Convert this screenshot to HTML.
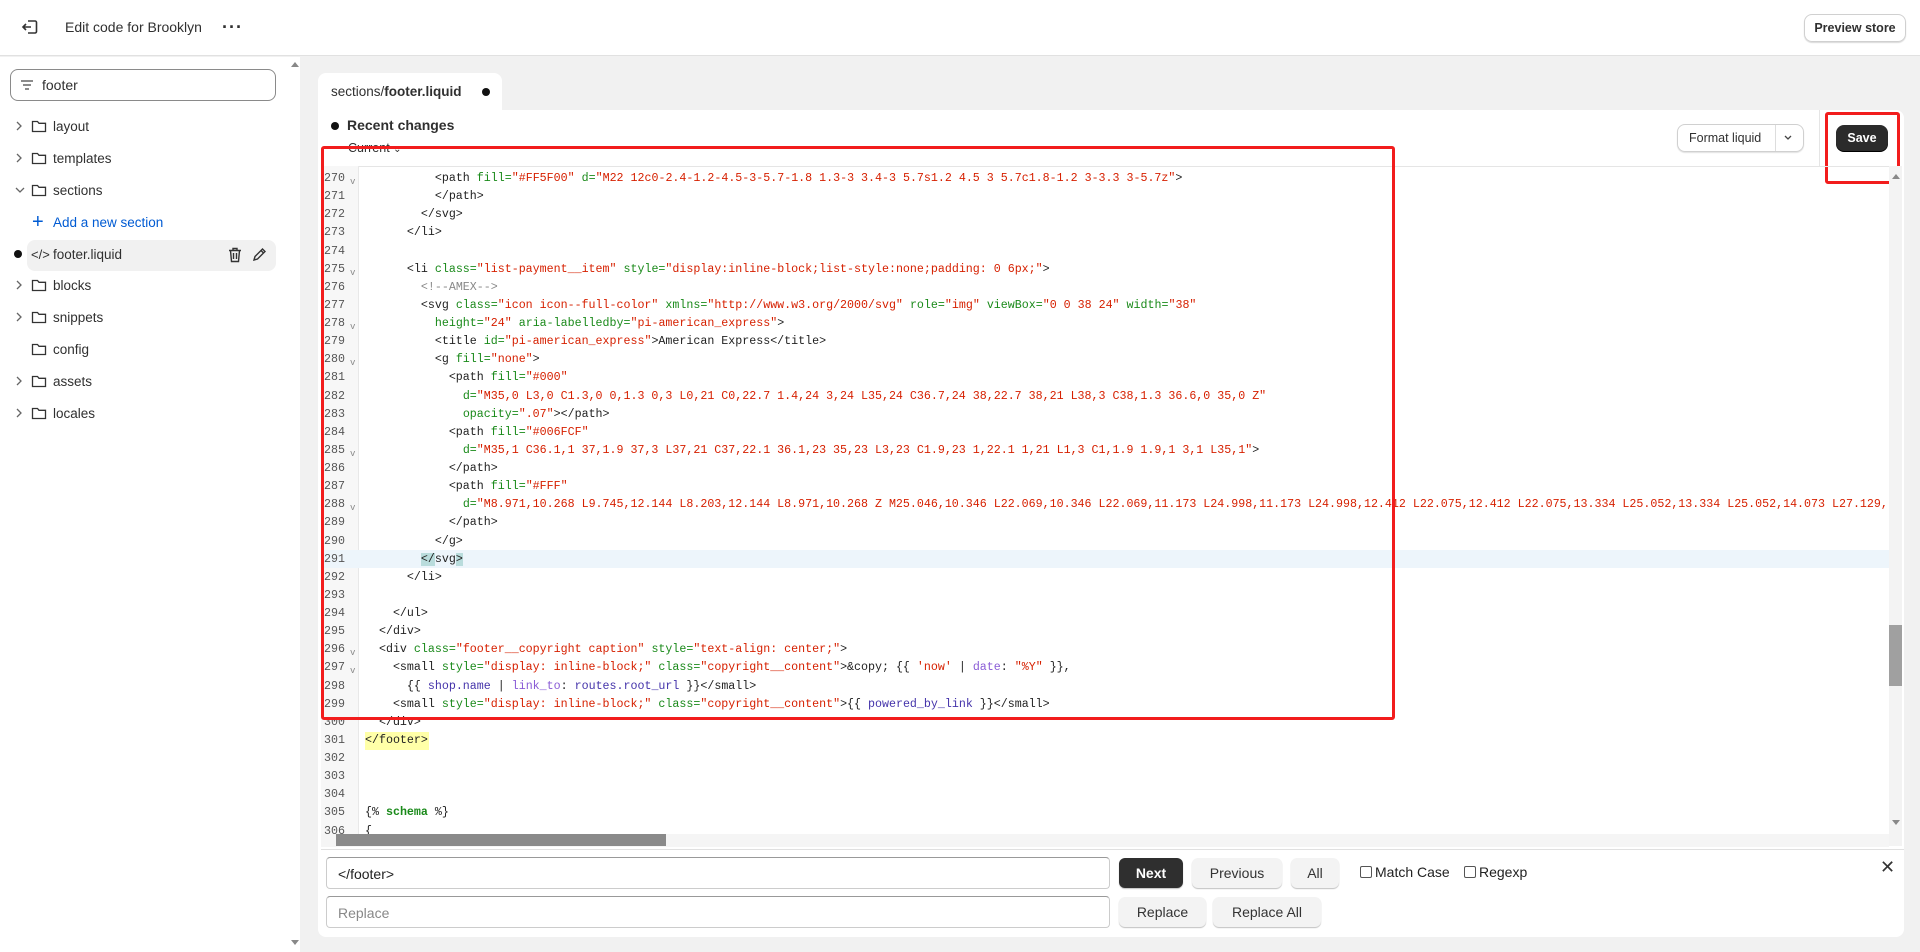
<!DOCTYPE html>
<html><head><meta charset="utf-8"><style>
*{box-sizing:border-box;margin:0;padding:0}
body{width:1920px;height:952px;overflow:hidden;background:#f1f1f1;font-family:"Liberation Sans",Arial,sans-serif;color:#303030;position:relative}
.abs{position:absolute}
#hdr{left:0;top:0;width:1920px;height:56px;background:#fff;border-bottom:1px solid #e1e1e1}
#side{left:0;top:57px;width:300px;height:895px;background:#fff}
.item{position:absolute;left:0;width:300px;height:30px;font-size:13.5px;color:#303030}
.item .chev{position:absolute;left:14px;top:8px}
.item .fold{position:absolute;left:31px;top:7px}
.item span{position:absolute;left:53px;top:7px}
#panel{left:318px;top:110px;width:1586px;height:827px;background:#fff;border-radius:0 8px 8px 8px}
#tab{left:318px;top:73px;width:184px;height:40px;background:#fff;border-radius:8px 8px 0 0}
.code{font-family:"Liberation Mono",monospace;font-size:11.65px;white-space:pre;line-height:18.12px}
#gut{left:321px;top:166px;width:38px;height:680px;background:#f7f7f7;border-right:1px solid #e8e8e8}
.t{color:#222}.a{color:#1a8a1a}.s{color:#d62000}.c{color:#888}.p{color:#8a5cd6}.v{color:#4433aa}
.btn{position:absolute;background:#f3f3f3;border-radius:6px;box-shadow:0 1px 1px rgba(0,0,0,.25);font-size:14px;color:#333;text-align:center}
</style></head><body>

<div id="hdr" class="abs">
  <svg class="abs" style="left:20px;top:17px" width="20" height="20" viewBox="0 0 20 20" fill="none" stroke="#333" stroke-width="1.6"><path d="M8 4h7a1.5 1.5 0 0 1 1.5 1.5v9A1.5 1.5 0 0 1 15 16H8"/><path d="M11 10H3M6 7l-3 3 3 3"/></svg>
  <div class="abs" style="left:65px;top:19px;font-size:14px;color:#303030">Edit code for Brooklyn</div>
  <div class="abs" style="left:222px;top:17px;font-size:18px;font-weight:bold;letter-spacing:1px">···</div>
  <div class="abs" style="left:1804px;top:14px;width:102px;height:28px;border:1px solid #d0d0d0;border-radius:8px;box-shadow:0 1px 1px rgba(0,0,0,.15);font-size:12.5px;text-align:center;line-height:26px;font-weight:bold;color:#303030">Preview store</div>
</div>

<div id="side" class="abs">
  <div class="abs" style="left:291px;top:5px;width:0;height:0;border-left:4px solid transparent;border-right:4px solid transparent;border-bottom:5px solid #888"></div>
  <div class="abs" style="left:291px;top:883px;width:0;height:0;border-left:4px solid transparent;border-right:4px solid transparent;border-top:5px solid #888"></div>
  <div class="abs" style="left:10px;top:12px;width:266px;height:32px;border:1px solid #8a8a8a;border-radius:8px">
    <svg class="abs" style="left:9px;top:9px" width="14" height="12" viewBox="0 0 14 12" stroke="#666" stroke-width="1.4"><path d="M1 2h12M3 6h8M5 10h4"/></svg>
    <div class="abs" style="left:31px;top:7px;font-size:14px;color:#303030">footer</div>
  </div>
</div>
<div class="abs" style="left:27px;top:240px;width:249px;height:31px;background:#f1f1f1;border-radius:8px"></div>
<div class="abs" style="left:14px;top:250px;width:8px;height:8px;border-radius:50%;background:#111"></div>

<div class="item" style="top:112px"><svg class="chev" width="10" height="12" viewBox="0 0 10 12" fill="none" stroke="#666" stroke-width="1.3"><path d="M3 2l4 4-4 4"/></svg><svg class="fold" width="16" height="14" viewBox="0 0 16 14" fill="none" stroke="#333" stroke-width="1.3"><path d="M1.5 2.5h5l1.5 1.8h6.5v8.2h-13z"/></svg><span>layout</span></div>
<div class="item" style="top:144px"><svg class="chev" width="10" height="12" viewBox="0 0 10 12" fill="none" stroke="#666" stroke-width="1.3"><path d="M3 2l4 4-4 4"/></svg><svg class="fold" width="16" height="14" viewBox="0 0 16 14" fill="none" stroke="#333" stroke-width="1.3"><path d="M1.5 2.5h5l1.5 1.8h6.5v8.2h-13z"/></svg><span>templates</span></div>
<div class="item" style="top:176px"><svg class="chev" width="12" height="12" viewBox="0 0 12 12" fill="none" stroke="#666" stroke-width="1.3"><path d="M2 4l4 4 4-4"/></svg><svg class="fold" width="16" height="14" viewBox="0 0 16 14" fill="none" stroke="#333" stroke-width="1.3"><path d="M1.5 2.5h5l1.5 1.8h6.5v8.2h-13z"/></svg><span>sections</span></div>
<div class="item" style="top:208px;color:#005bd3"><span style="left:32px;top:3px;font-size:20px">+</span><span>Add a new section</span></div>
<div class="item" style="top:240px"><span style="left:31px;font-size:13px">&lt;/&gt;</span><span>footer.liquid</span>
<svg class="abs" style="left:228px;top:7px" width="14" height="16" viewBox="0 0 14 16" fill="none" stroke="#333" stroke-width="1.4"><path d="M1 3.5h12M5 3.5V1.5h4v2M2.5 3.5l1 11h7l1-11M5.5 6v6M8.5 6v6"/></svg>
<svg class="abs" style="left:252px;top:7px" width="15" height="15" viewBox="0 0 15 15" fill="none" stroke="#333" stroke-width="1.4"><path d="M2 13l1-3.5 7.5-7.5 2.5 2.5-7.5 7.5z M9 3.5l2.5 2.5"/></svg></div>
<div class="item" style="top:271px"><svg class="chev" width="10" height="12" viewBox="0 0 10 12" fill="none" stroke="#666" stroke-width="1.3"><path d="M3 2l4 4-4 4"/></svg><svg class="fold" width="16" height="14" viewBox="0 0 16 14" fill="none" stroke="#333" stroke-width="1.3"><path d="M1.5 2.5h5l1.5 1.8h6.5v8.2h-13z"/></svg><span>blocks</span></div>
<div class="item" style="top:303px"><svg class="chev" width="10" height="12" viewBox="0 0 10 12" fill="none" stroke="#666" stroke-width="1.3"><path d="M3 2l4 4-4 4"/></svg><svg class="fold" width="16" height="14" viewBox="0 0 16 14" fill="none" stroke="#333" stroke-width="1.3"><path d="M1.5 2.5h5l1.5 1.8h6.5v8.2h-13z"/></svg><span>snippets</span></div>
<div class="item" style="top:335px"><svg class="fold" width="16" height="14" viewBox="0 0 16 14" fill="none" stroke="#333" stroke-width="1.3"><path d="M1.5 2.5h5l1.5 1.8h6.5v8.2h-13z"/></svg><span>config</span></div>
<div class="item" style="top:367px"><svg class="chev" width="10" height="12" viewBox="0 0 10 12" fill="none" stroke="#666" stroke-width="1.3"><path d="M3 2l4 4-4 4"/></svg><svg class="fold" width="16" height="14" viewBox="0 0 16 14" fill="none" stroke="#333" stroke-width="1.3"><path d="M1.5 2.5h5l1.5 1.8h6.5v8.2h-13z"/></svg><span>assets</span></div>
<div class="item" style="top:399px"><svg class="chev" width="10" height="12" viewBox="0 0 10 12" fill="none" stroke="#666" stroke-width="1.3"><path d="M3 2l4 4-4 4"/></svg><svg class="fold" width="16" height="14" viewBox="0 0 16 14" fill="none" stroke="#333" stroke-width="1.3"><path d="M1.5 2.5h5l1.5 1.8h6.5v8.2h-13z"/></svg><span>locales</span></div>

<div id="tab" class="abs">
  <div class="abs" style="left:13px;top:11px;font-size:13.5px;color:#303030">sections/<b style="font-weight:600">footer.liquid</b></div>
  <div class="abs" style="left:164px;top:15px;width:8px;height:8px;border-radius:50%;background:#111"></div>
</div>
<div id="panel" class="abs"></div>
<div class="abs" style="left:331px;top:122px;width:8px;height:8px;border-radius:50%;background:#111"></div>
<div class="abs" style="left:347px;top:117px;font-size:14px;font-weight:600;color:#303030">Recent changes</div>
<div class="abs" style="left:348px;top:141px;font-size:12.5px;color:#303030">Current <span style="font-size:10px">⌄</span></div>
<div class="abs" style="left:1677px;top:124px;width:127px;height:28px;border:1px solid #d0d0d0;border-radius:8px;box-shadow:0 1px 1px rgba(0,0,0,.12);font-size:12.5px;color:#303030">
  <div class="abs" style="left:11px;top:6px">Format liquid</div>
  <div class="abs" style="left:97px;top:0;width:1px;height:26px;background:#ddd"></div>
  <svg class="abs" style="left:105px;top:9px" width="10" height="8" viewBox="0 0 10 8" fill="none" stroke="#444" stroke-width="1.3"><path d="M2 2l3 3 3-3"/></svg>
</div>
<div class="abs" style="left:1819px;top:110px;width:1px;height:56px;background:#e5e5e5"></div>
<div class="abs" style="left:1836px;top:125px;width:52px;height:26px;background:#2b2b2b;border-radius:8px;color:#fff;font-size:12.5px;font-weight:bold;text-align:center;line-height:26px;box-shadow:0 1px 0 #000">Save</div>
<div class="abs" style="left:1825px;top:112px;width:75px;height:72px;border:3px solid #f21d1d;border-radius:3px"></div>
<div class="abs" style="left:359px;top:166px;width:1530px;height:1px;background:#e5e5e5"></div>

<div id="gut" class="abs"></div>
<div class="abs" style="left:321px;top:550px;width:1568px;height:18px;background:#edf5fb"></div>
<div class="abs" style="left:365px;top:732px;width:64px;height:18px;background:#ffffa8"></div>
<div class="abs" style="left:1889px;top:166px;width:13px;height:680px;background:#f3f3f3"></div>
<div class="abs" style="left:1889px;top:625px;width:13px;height:61px;background:#a0a0a0"></div>
<div class="abs" style="left:1892px;top:174px;border-left:4px solid transparent;border-right:4px solid transparent;border-bottom:5px solid #888;width:0;height:0"></div>
<div class="abs" style="left:1892px;top:820px;border-left:4px solid transparent;border-right:4px solid transparent;border-top:5px solid #888;width:0;height:0"></div>
<div class="abs" style="left:321px;top:834px;width:1568px;height:13px;background:#f5f5f5"></div>
<div class="abs" style="left:336px;top:834px;width:330px;height:12px;background:#8a8a8a"></div>

<div class="abs code" style="left:324px;top:170px;color:#555;width:35px;height:664px;overflow:hidden">270
271
272
273
274
275
276
277
278
279
280
281
282
283
284
285
286
287
288
289
290
291
292
293
294
295
296
297
298
299
300
301
302
303
304
305
306</div>
<div class="abs code" style="left:350px;top:173px;color:#888;font-size:9px">v




v


v

v




v


v







v
v</div>

<div class="abs code" style="left:365px;top:170px;width:1524px;height:664px;overflow:hidden;color:#222">          <span class="t">&lt;path</span> <span class="a">fill=</span><span class="s">"#FF5F00"</span> <span class="a">d=</span><span class="s">"M22 12c0-2.4-1.2-4.5-3-5.7-1.8 1.3-3 3.4-3 5.7s1.2 4.5 3 5.7c1.8-1.2 3-3.3 3-5.7z"</span>&gt;
          &lt;/path&gt;
        &lt;/svg&gt;
      &lt;/li&gt;

      &lt;li <span class="a">class=</span><span class="s">"list-payment__item"</span> <span class="a">style=</span><span class="s">"display:inline-block;list-style:none;padding: 0 6px;"</span>&gt;
        <span class="c">&lt;!--AMEX--&gt;</span>
        &lt;svg <span class="a">class=</span><span class="s">"icon icon--full-color"</span> <span class="a">xmlns=</span><span class="s">"http://www.w3.org/2000/svg"</span> <span class="a">role=</span><span class="s">"img"</span> <span class="a">viewBox=</span><span class="s">"0 0 38 24"</span> <span class="a">width=</span><span class="s">"38"</span>
          <span class="a">height=</span><span class="s">"24"</span> <span class="a">aria-labelledby=</span><span class="s">"pi-american_express"</span>&gt;
          &lt;title <span class="a">id=</span><span class="s">"pi-american_express"</span>&gt;American Express&lt;/title&gt;
          &lt;g <span class="a">fill=</span><span class="s">"none"</span>&gt;
            &lt;path <span class="a">fill=</span><span class="s">"#000"</span>
              <span class="a">d=</span><span class="s">"M35,0 L3,0 C1.3,0 0,1.3 0,3 L0,21 C0,22.7 1.4,24 3,24 L35,24 C36.7,24 38,22.7 38,21 L38,3 C38,1.3 36.6,0 35,0 Z"</span>
              <span class="a">opacity=</span><span class="s">".07"</span>&gt;&lt;/path&gt;
            &lt;path <span class="a">fill=</span><span class="s">"#006FCF"</span>
              <span class="a">d=</span><span class="s">"M35,1 C36.1,1 37,1.9 37,3 L37,21 C37,22.1 36.1,23 35,23 L3,23 C1.9,23 1,22.1 1,21 L1,3 C1,1.9 1.9,1 3,1 L35,1"</span>&gt;
            &lt;/path&gt;
            &lt;path <span class="a">fill=</span><span class="s">"#FFF"</span>
              <span class="a">d=</span><span class="s">"M8.971,10.268 L9.745,12.144 L8.203,12.144 L8.971,10.268 Z M25.046,10.346 L22.069,10.346 L22.069,11.173 L24.998,11.173 L24.998,12.412 L22.075,12.412 L22.075,13.334 L25.052,13.334 L25.052,14.073 L27.129,</span>
            &lt;/path&gt;
          &lt;/g&gt;
        <span style="background:#b9dcdc">&lt;/</span>svg<span style="background:#b9dcdc">&gt;</span>
      &lt;/li&gt;

    &lt;/ul&gt;
  &lt;/div&gt;
  &lt;div <span class="a">class=</span><span class="s">"footer__copyright caption"</span> <span class="a">style=</span><span class="s">"text-align: center;"</span>&gt;
    &lt;small <span class="a">style=</span><span class="s">"display: inline-block;"</span> <span class="a">class=</span><span class="s">"copyright__content"</span>&gt;&amp;copy; {{ <span class="s">'now'</span> | <span class="p">date</span>: <span class="s">"%Y"</span> }},
      {{ <span class="v">shop.name</span> | <span class="p">link_to</span>: <span class="v">routes.root_url</span> }}&lt;/small&gt;
    &lt;small <span class="a">style=</span><span class="s">"display: inline-block;"</span> <span class="a">class=</span><span class="s">"copyright__content"</span>&gt;{{ <span class="v">powered_by_link</span> }}&lt;/small&gt;
  &lt;/div&gt;
&lt;/footer&gt;



{% <b class="a">schema</b> %}
{</div>

<div class="abs" style="left:321px;top:146px;width:1074px;height:574px;border:3px solid #f21d1d;border-radius:3px"></div>

<div class="abs" style="left:321px;top:849px;width:1583px;height:1px;background:#e0e0e0"></div>
<div class="abs" style="left:326px;top:857px;width:784px;height:32px;background:#fff;border:1px solid #ccc;border-top-color:#999;border-radius:4px;font-size:14px;color:#222;padding:8px 11px">&lt;/footer&gt;</div>
<div class="abs" style="left:326px;top:896px;width:784px;height:32px;background:#fff;border:1px solid #ccc;border-top-color:#999;border-radius:4px;font-size:14px;color:#888;padding:8px 11px">Replace</div>
<div class="btn" style="left:1119px;top:858px;width:64px;height:30px;line-height:30px;background:#2f2f2f;color:#fff;font-weight:bold">Next</div>
<div class="btn" style="left:1192px;top:858px;width:90px;height:30px;line-height:30px">Previous</div>
<div class="btn" style="left:1291px;top:858px;width:48px;height:30px;line-height:30px">All</div>
<div class="abs" style="left:1360px;top:866px;width:12px;height:12px;border:1px solid #555;border-radius:2px;background:#fff"></div>
<div class="abs" style="left:1375px;top:864px;font-size:14px;color:#222">Match Case</div>
<div class="abs" style="left:1464px;top:866px;width:12px;height:12px;border:1px solid #555;border-radius:2px;background:#fff"></div>
<div class="abs" style="left:1479px;top:864px;font-size:14px;color:#222">Regexp</div>
<div class="abs" style="left:1880px;top:857px;font-size:18px;color:#333">✕</div>
<div class="btn" style="left:1119px;top:897px;width:87px;height:30px;line-height:30px">Replace</div>
<div class="btn" style="left:1213px;top:897px;width:108px;height:30px;line-height:30px">Replace All</div>
</body></html>
